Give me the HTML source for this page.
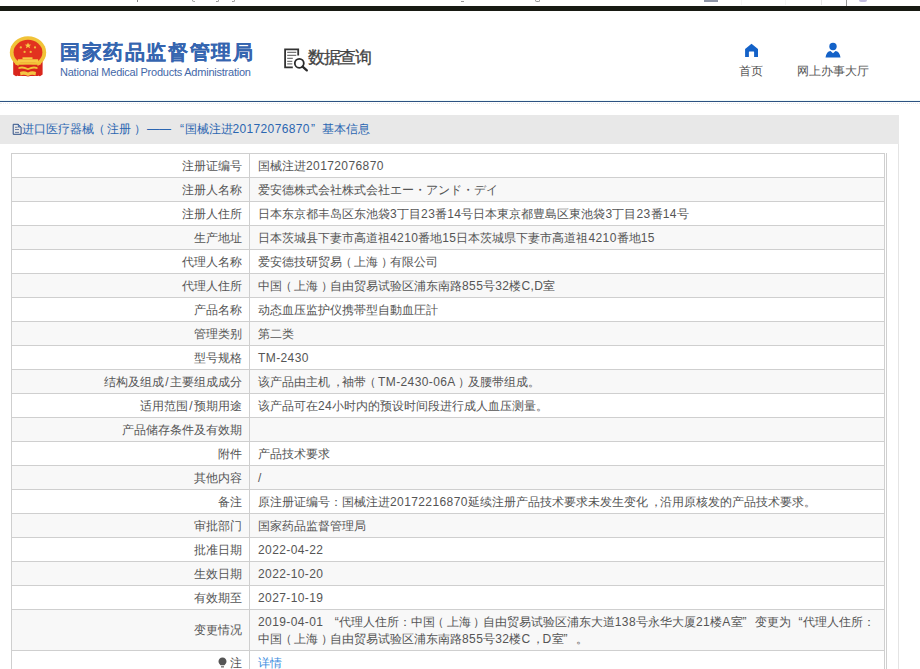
<!DOCTYPE html>
<html><head><meta charset="utf-8">
<style>
*{margin:0;padding:0;box-sizing:border-box}
html,body{width:920px;height:669px;overflow:hidden;background:#fff}
body{position:relative;font-family:"Liberation Sans",sans-serif;font-size:12px;color:#555}
.abs{position:absolute}
#topbar{left:0;top:6px;width:920px;height:5px;background:#181a13}
#hline{left:0;top:101px;width:920px;height:1px;background:#2d5282}
#hcyan{left:0;top:100px;width:920px;height:1px;background:#f0fafa}
#hdot{left:0;top:103px;width:920px;height:0;border-top:1px dotted #ececec}
#t1{left:60px;top:40px;font-size:20px;line-height:24px;font-weight:bold;-webkit-text-stroke:0.12px #3565b0;color:#3565b0;white-space:nowrap;letter-spacing:1.6px}
#t2{left:60px;top:66px;font-size:11px;line-height:13px;letter-spacing:-0.23px;color:#4468a8;white-space:nowrap}
#sq{left:308px;top:47px;font-size:17px;line-height:22px;letter-spacing:-1.4px;color:#444;-webkit-text-stroke:0.3px #444;white-space:nowrap}
.nav{font-size:12px;line-height:16px;color:#555;white-space:nowrap}
#titlebar{left:0;top:115px;width:899px;height:29px;background:#e8e8e8}
#panelr{left:898px;top:144px;width:1px;height:530px;background:#e4e4e4}
.ttl{top:121px;color:#2b66b1;white-space:nowrap;line-height:16px}
.d{letter-spacing:.35px}
table{position:absolute;left:11px;top:153px;border-collapse:collapse;width:874px;table-layout:fixed}
td{color:#555;border:1px solid #cfcfcf;height:24px;padding:0 8px;white-space:nowrap;line-height:16px}
td.l{width:238px;text-align:right;padding-right:7px}
tr:nth-child(even) td{background:#f8f8f8}
#outr{left:886px;top:153px;width:1px;height:520px;background:#cfcfcf}
a{color:#3b8de0;text-decoration:none}
i{font-style:normal;letter-spacing:.4px}
b{font-weight:normal}
s{text-decoration:none;position:relative}
.pl{left:-2.5px}
.pr{left:2.5px}
.cm{left:2px}
.sl{margin:0 1.5px}
.q1{display:inline-block;width:12px;text-align:right}
.q2{display:inline-block;width:12px;text-align:left}
</style></head><body>
<div class="abs" style="left:137px;top:0;width:1px;height:2px;background:#888"></div>
<div class="abs" style="left:192px;top:0;width:3px;height:2px;border-left:1px solid #999;border-bottom:1px solid #aaa;border-radius:0 0 0 3px"></div>
<div class="abs" style="left:216px;top:0;width:3px;height:2px;border-bottom:1px solid #999;border-right:1px solid #999;border-radius:0 0 3px 0"></div>
<div class="abs" style="left:232px;top:0;width:3px;height:2px;border-bottom:1px solid #999;border-right:1px solid #999;border-radius:0 0 3px 0"></div>
<div class="abs" style="left:461px;top:1px;width:3px;height:1px;background:#999"></div>
<div class="abs" style="left:535px;top:0;width:5px;height:2px;border:1px solid #999;border-top:0;border-radius:0 0 3px 3px"></div>
<div class="abs" style="left:704px;top:0;width:14px;height:2px;background:#8f96a8"></div>
<div class="abs" style="left:741px;top:0;width:1px;height:5px;background:#f5f5f5"></div>
<div class="abs" style="left:785px;top:0;width:1px;height:5px;background:#f5f5f5"></div>
<div class="abs" style="left:821px;top:0;width:1px;height:5px;background:#e6e6e6"></div>
<div class="abs" style="left:846px;top:0;width:1px;height:6px;background:#999"></div>
<div class="abs" style="left:859px;top:0;width:8px;height:2px;background:#c2bde0;border-radius:0 0 3px 3px"></div>
<div class="abs" id="topbar"></div>
<div class="abs" id="hcyan"></div>
<div class="abs" id="hline"></div>
<div class="abs" id="hdot"></div>

<svg class="abs" style="left:0;top:30px" width="56" height="56" viewBox="0 30 56 56">
  <path d="M13.2 60 L42.6 60 L42.6 74.5 L40 76.2 L35.5 74.8 L28 76.5 L20.5 74.8 L16 76.2 L13.2 74.5 Z" fill="#d9261c"/>
  <ellipse cx="28" cy="52.4" rx="18.2" ry="16.2" fill="#f1c338"/>
  <ellipse cx="28" cy="52.2" rx="14.4" ry="12.4" fill="#e2321f"/>
  <path d="M28 42.4 L28.9 44.6 L31.2 44.7 L29.4 46.1 L30.1 48.3 L28 47 L25.9 48.3 L26.6 46.1 L24.8 44.7 L27.1 44.6 Z" fill="#f7cb45"/>
  <circle cx="20.8" cy="47.4" r="1.15" fill="#f3b83c"/>
  <circle cx="35" cy="47.4" r="1.15" fill="#f3b83c"/>
  <circle cx="24.6" cy="51.9" r="1.15" fill="#f3b83c"/>
  <circle cx="30.7" cy="51.9" r="1.15" fill="#f3b83c"/>
  <rect x="22.5" y="57.3" width="10" height="1.9" fill="#f7cb45"/>
  <path d="M18 59.2 L38 59.2 L38.5 62.8 L17.5 62.8 Z" fill="#f7cb45"/>
  <path d="M15 62.6 L41 62.6 L40.5 64.8 L15.5 64.8 Z" fill="#f1c338"/>
  <path d="M18.5 64.8 L37.5 64.8 L38 76 L18 76 Z" fill="#d9261c"/>
  <path d="M18.5 67.2 Q23 65.5 28 68.2 Q33 65.5 37.5 67.2 L37.5 69 Q33 67.5 28 70 Q23 67.5 18.5 69 Z" fill="#f1c338"/>
  <path d="M20 72 Q24 70.5 28 72.5 Q32 70.5 36 72 L35.5 75.5 Q32 74 28 76 Q24 74 20.5 75.5 Z" fill="#f4c544"/>
</svg>
<div class="abs" id="t1">国家药品监督管理局</div>
<div class="abs" id="t2">National Medical Products Administration</div>

<svg class="abs" style="left:283px;top:47px" width="26" height="26" viewBox="0 0 26 26">
  <path d="M15.2 8.5 V2.3 H2.1 V20.4 H9.8" fill="none" stroke="#333" stroke-width="1.8"/>
  <path d="M4.2 5.4 H13.3 M4.2 8.4 H13.3 M4.2 11.4 H9.8 M4.2 14.4 H9.3 M4.2 16.9 H9.3" stroke="#777" stroke-width="1.1"/>
  <circle cx="16.3" cy="16.3" r="4.5" fill="#fff" stroke="#2a2a2a" stroke-width="1.8"/>
  <path d="M19.6 19.6 L23.8 23.4" stroke="#2a2a2a" stroke-width="2.3" stroke-linecap="round"/>
</svg>
<div class="abs" id="sq">数据查询</div>

<svg class="abs" style="left:744px;top:43px" width="15" height="15" viewBox="0 0 15 15">
  <path d="M7.5 0.8 L14 5.9 L14 13.9 L10.1 13.9 L10.1 9 Q10.1 8.5 9.6 8.5 L5.4 8.5 Q4.9 8.5 4.9 9 L4.9 13.9 L1.1 13.9 L1.1 5.9 Z" fill="#1462c8"/>
</svg>
<div class="abs nav" style="left:739px;top:63px">首页</div>
<svg class="abs" style="left:825px;top:42px" width="16" height="16" viewBox="0 0 16 16">
  <circle cx="8" cy="4.5" r="3.7" fill="#1462c8"/>
  <path d="M0.5 15.5 Q1.5 9.2 5.5 8.9 L8 11.2 L10.5 8.9 Q14.5 9.2 15.5 15.5 Z" fill="#1462c8"/>
</svg>
<div class="abs nav" style="left:797px;top:63px">网上办事大厅</div>

<div class="abs" id="titlebar"></div>
<div class="abs" id="panelr"></div>
<svg class="abs" style="left:12px;top:123px" width="10" height="12" viewBox="0 0 10 12">
  <path d="M1.2 1.3 H6.3 L9.1 4.1 V11.3 H1.2 Z" fill="none" stroke="#2d4f86" stroke-width="1"/>
  <path d="M6.3 1.3 V4.1 H9.1" fill="#6f9bd8" stroke="#2d4f86" stroke-width="0.7"/>
  <path d="M3 4.3 H5.5 M3 6.5 H7 M3 9.4 H7" stroke="#5a6f99" stroke-width="0.9"/>
</svg>
<div class="abs ttl" style="left:22px">进口医疗器械</div>
<div class="abs ttl" style="left:93px">（</div>
<div class="abs ttl" style="left:107px">注册</div>
<div class="abs ttl" style="left:134px">）</div>
<div class="abs ttl" style="left:147px">——</div>
<div class="abs ttl" style="left:180px">“</div>
<div class="abs ttl" style="left:184.5px">国械注进<span class="d">20172076870</span></div>
<div class="abs ttl" style="left:311px">”</div>
<div class="abs ttl" style="left:322px">基本信息</div>

<table>
<col style="width:238px"><col>
<tr><td class="l">注册证编号</td><td>国械注进<i>20172076870</i></td></tr>
<tr><td class="l">注册人名称</td><td>爱安德株式会社株式会社エー・アンド・デイ</td></tr>
<tr><td class="l">注册人住所</td><td>日本东京都丰岛区东池袋<i>3</i>丁目<i>23</i>番<i>14</i>号日本東京都豊島区東池袋<i>3</i>丁目<i>23</i>番<i>14</i>号</td></tr>
<tr><td class="l">生产地址</td><td>日本茨城县下妻市高道祖<i>4210</i>番地<i>15</i>日本茨城県下妻市高道祖<i>4210</i>番地<i>15</i></td></tr>
<tr><td class="l">代理人名称</td><td>爱安德技研贸易<s class="pl">（</s>上海<s class="pr">）</s>有限公司</td></tr>
<tr><td class="l">代理人住所</td><td>中国<s class="pl">（</s>上海<s class="pr">）</s>自由贸易试验区浦东南路<i>855</i>号<i>32</i>楼<i>C,D</i>室</td></tr>
<tr><td class="l">产品名称</td><td>动态血压监护仪携帯型自動血圧計</td></tr>
<tr><td class="l">管理类别</td><td>第二类</td></tr>
<tr><td class="l">型号规格</td><td><i>TM-2430</i></td></tr>
<tr><td class="l">结构及组成<s class="sl">/</s>主要组成成分</td><td>该产品由主机<s class="cm">，</s>袖带<s class="pl">（</s><i>TM-2430-06A</i><s class="pr">）</s>及腰带组成。</td></tr>
<tr><td class="l">适用范围<s class="sl">/</s>预期用途</td><td>该产品可在<i>24</i>小时内的预设时间段进行成人血压测量。</td></tr>
<tr><td class="l">产品储存条件及有效期</td><td></td></tr>
<tr><td class="l">附件</td><td>产品技术要求</td></tr>
<tr><td class="l">其他内容</td><td>/</td></tr>
<tr><td class="l">备注</td><td>原注册证编号：国械注进<i>20172216870</i>延续注册产品技术要求未发生变化<s class="cm">，</s>沿用原核发的产品技术要求。</td></tr>
<tr><td class="l">审批部门</td><td>国家药品监督管理局</td></tr>
<tr><td class="l">批准日期</td><td><i>2022-04-22</i></td></tr>
<tr><td class="l">生效日期</td><td><i>2022-10-20</i></td></tr>
<tr><td class="l">有效期至</td><td><i>2027-10-19</i></td></tr>
<tr><td class="l" style="height:41px">变更情况</td><td style="line-height:17px;padding-top:1px"><i>2019-04-01</i> <b class="q1">“</b>代理人住所：中国<s class="pl">（</s>上海<s class="pr">）</s>自由贸易试验区浦东大道<i>138</i>号永华大厦<i>21</i>楼<i>A</i>室<b class="q2">”</b>变更为<b class="q1">“</b>代理人住所：<br>中国<s class="pl">（</s>上海<s class="pr">）</s>自由贸易试验区浦东南路<i>855</i>号<i>32</i>楼<i>C</i><s class="cm">，</s><i>D</i>室<b class="q2">”</b>。</td></tr>
<tr><td class="l"><svg width="9" height="11" viewBox="0 0 9 11" style="vertical-align:-1px;margin-right:3px"><path d="M4.5 0.5 C7 0.5 8.5 2.3 8.5 4.5 C8.5 6.3 7 7.3 6.5 8.3 L2.5 8.3 C2 7.3 0.5 6.3 0.5 4.5 C0.5 2.3 2 0.5 4.5 0.5 Z" fill="#555"/><rect x="3" y="9" width="3" height="1.6" fill="#888"/></svg>注</td><td><a>详情</a></td></tr>
</table>
<div class="abs" id="outr"></div>
</body></html>
